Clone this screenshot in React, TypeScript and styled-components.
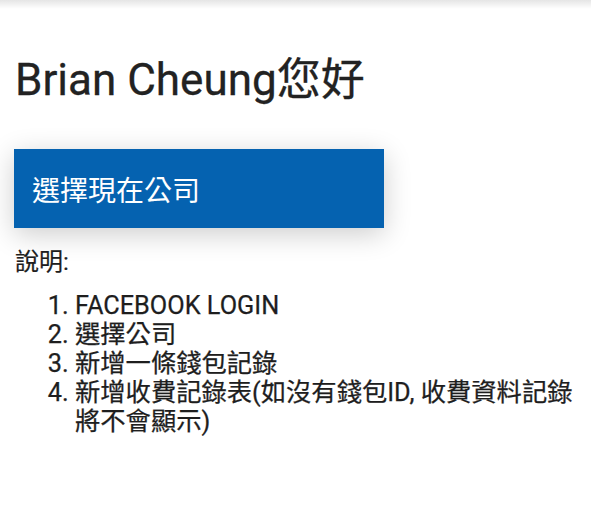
import React from "react";
import styled, { createGlobalStyle } from "styled-components";

const GlobalStyle = createGlobalStyle`
  html, body {
    margin: 0;
    padding: 0;
    background: #ffffff;
  }
  body {
    font-family: Roboto, "Noto Sans CJK TC", sans-serif;
    color: #1e1e1e;
  }
`;

const Page = styled.div`
  width: 591px;
  min-height: 507px;
  display: flex;
  flex-direction: column;
`;

const AppBarShadow = styled.div`
  height: 9px;
  background: linear-gradient(to bottom, rgba(0, 0, 0, 0.1), rgba(0, 0, 0, 0));
`;

const Content = styled.main`
  display: flex;
  flex-direction: column;
  padding: 45px 14px 0 14px;
`;

const Greeting = styled.h1`
  margin: 0;
  font-size: 44px;
  line-height: 52px;
  font-weight: 400;
  color: #222222;
  padding-left: 1px;
  -webkit-text-stroke: 0.3px #222222;
`;

const SelectButton = styled.button`
  margin-top: 43px;
  width: 370px;
  height: 79px;
  border: none;
  background: #0562b0;
  color: #ffffff;
  font-family: Roboto, "Noto Sans CJK TC", sans-serif;
  font-size: 28px;
  text-align: left;
  padding: 0 18px;
  box-shadow: 0 6px 28px rgba(0, 0, 0, 0.2);
  cursor: pointer;
`;

const Label = styled.div`
  margin-top: 18px;
  font-size: 24px;
  line-height: 32px;
  padding-left: 1px;
  -webkit-text-stroke: 0.2px #1e1e1e;
`;

const Steps = styled.ol`
  margin: 13px 0 0 0;
  padding-left: 61px;
  font-size: 25.3px;
  line-height: 29px;
  width: 510px;
  -webkit-text-stroke: 0.25px #1e1e1e;
`;

const Step = styled.li`
  padding-left: 0;
`;

export default function App() {
  return (
    <>
      <GlobalStyle />
      <Page>
        <AppBarShadow />
        <Content>
          <Greeting>Brian Cheung您好</Greeting>
          <SelectButton>選擇現在公司</SelectButton>
          <Label>說明:</Label>
          <Steps>
            <Step>FACEBOOK LOGIN</Step>
            <Step>選擇公司</Step>
            <Step>新增一條錢包記錄</Step>
            <Step>新增收費記錄表(如沒有錢包ID, 收費資料記錄將不會顯示)</Step>
          </Steps>
        </Content>
      </Page>
    </>
  );
}
